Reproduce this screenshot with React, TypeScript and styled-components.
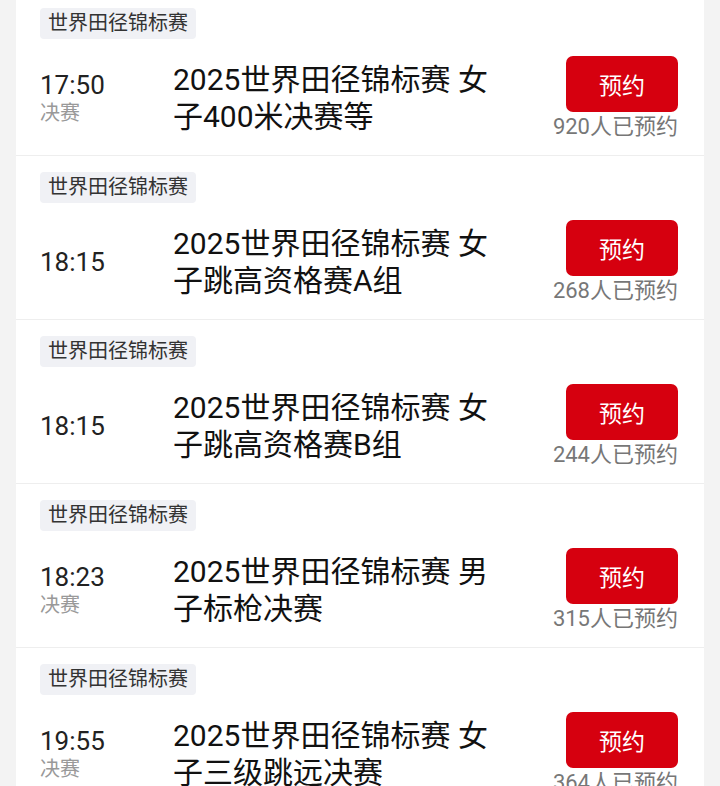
import styled, { createGlobalStyle } from "styled-components";

type MatchType = {
  time: string;
  stage?: string;
  title: string;
  count: number;
};

const matches: MatchType[] = [
  { time: "17:50", stage: "决赛", title: "2025世界田径锦标赛 女子400米决赛等", count: 920 },
  { time: "18:15", title: "2025世界田径锦标赛 女子跳高资格赛A组", count: 268 },
  { time: "18:15", title: "2025世界田径锦标赛 女子跳高资格赛B组", count: 244 },
  { time: "18:23", stage: "决赛", title: "2025世界田径锦标赛 男子标枪决赛", count: 315 },
  { time: "19:55", stage: "决赛", title: "2025世界田径锦标赛 女子三级跳远决赛", count: 364 },
];

const GlobalStyle = createGlobalStyle`
  body {
    margin: 0;
    background: #f3f3f3;
    font-family: Roboto, "Noto Sans CJK SC", sans-serif;
    overflow: hidden;
  }
`;

export default function App() {
  return (
    <>
      <GlobalStyle />
      <Card>
        {matches.map((m, i) => (
          <Item key={i}>
            <Tag>世界田径锦标赛</Tag>
            <Row>
              <TimeCol>
                <Time>{m.time}</Time>
                {m.stage && <Stage>{m.stage}</Stage>}
              </TimeCol>
              <Title>{m.title}</Title>
              <Side>
                <Button>预约</Button>
                <Count>{m.count}人已预约</Count>
              </Side>
            </Row>
          </Item>
        ))}
      </Card>
    </>
  );
}

// list is scrolled a little, first row's top is cut
const Card = styled.div`
  margin: -8px 16px 0;
  background: #fff;
`;

const Item = styled.div`
  padding: 16px 26px 0 24px;
  height: 147px;
  border-bottom: 1px solid #eeeeee;
`;

const Tag = styled.div`
  display: inline-block;
  height: 31px;
  line-height: 31px;
  padding: 0 8px;
  border-radius: 4px;
  background: #f0f1f5;
  color: #333;
  font-size: 20px;
`;

const Row = styled.div`
  display: flex;
  align-items: center;
  height: 116px;
`;

const TimeCol = styled.div`
  display: flex;
  flex-direction: column;
  justify-content: center;
  width: 133px;
  flex-shrink: 0;
  padding-top: 2px;
`;

const Time = styled.span`
  font-size: 26px;
  line-height: 30px;
  color: #222;
`;

const Stage = styled.span`
  font-size: 20px;
  line-height: 26px;
  color: #999;
`;

const Title = styled.div`
  width: 332px;
  flex-shrink: 0;
  padding-top: 1px;
  font-size: 30px;
  line-height: 37px;
  color: #111;
`;

const Side = styled.div`
  margin-left: auto;
  align-self: flex-start;
  margin-top: 17px;
  display: flex;
  flex-direction: column;
  align-items: flex-end;
`;

const Button = styled.button`
  width: 112px;
  height: 56px;
  border: none;
  border-radius: 7px;
  background: #d6000f;
  color: #fff;
  font-family: inherit;
  font-size: 23px;
  padding: 0;
`;

const Count = styled.span`
  margin-top: 2px;
  font-size: 22px;
  line-height: 26px;
  color: #777;
  white-space: nowrap;
`;
